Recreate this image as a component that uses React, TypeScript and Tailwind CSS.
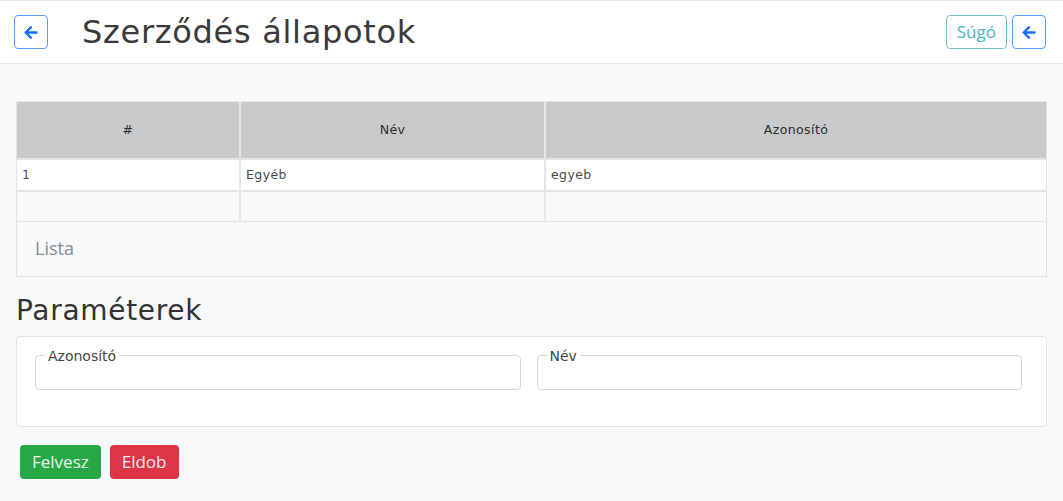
const mont = "font-['DejaVu_Sans',sans-serif]";
const open = "font-['Open_Sans',sans-serif]";

function ArrowIcon() {
  return (
    <svg viewBox="0 0 448 512" width="14" height="15" fill="currentColor">
      <path d="M257.5 445.1l-22.2 22.2c-9.4 9.4-24.6 9.4-33.9 0L7 273c-9.4-9.4-9.4-24.6 0-33.9L201.4 44.7c9.4-9.4 24.6-9.4 33.9 0l22.2 22.2c9.5 9.5 9.3 25-.4 34.3L136.6 216H424c13.3 0 24 10.7 24 24v32c0 13.3-10.7 24-24 24H136.6l120.5 114.8c9.8 9.3 10 24.8.4 34.3z" />
    </svg>
  );
}

function BackButton() {
  return (
    <button className="flex h-[34px] w-[34px] items-center justify-center rounded-[4px] border border-[#5a9bff] bg-white text-[#0d6efd]">
      <ArrowIcon />
    </button>
  );
}

function Field({ label }: { label: string }) {
  return (
    <fieldset className="h-[40px] rounded-[4px] border border-[#d3d7dc] bg-white px-[9px] pb-0">
      <legend className={`${mont} px-[3px] text-[14px] leading-[12px] text-[#444]`}>{label}</legend>
    </fieldset>
  );
}

export default function App() {
  const rows = [{ id: '1', name: 'Egyéb', key: 'egyeb' }];
  return (
    <div className="min-h-[501px] bg-[#f8f9fa]">
      <header className="flex h-[64px] items-center justify-between border-t border-b border-[#e6e6e6] bg-white px-[14px]">
        <div className="flex items-center gap-[34px]">
          <BackButton />
          <h1 className={`${mont} text-[32px] leading-none tracking-[0.7px] text-[#3a3a3a]`}>Szerződés állapotok</h1>
        </div>
        <div className="flex items-center gap-[5px] pr-[3px]">
          <button className={`${open} h-[34px] rounded-[4px] border border-[#6cc4d3] px-[10px] text-[17px] text-[#4cb4c6]`}>
            Súgó
          </button>
          <BackButton />
        </div>
      </header>

      <main className="px-[16px] pt-[37px]">
        <div className="border border-[#e1e3e6]">
          <table className={`${mont} w-full border-collapse text-[12.5px] tracking-[0.4px]`}>
            <thead>
              <tr className="h-[57px] bg-[#c8c9cb] text-[#2f2f2f]">
                <th className="w-[223px] border-r-2 border-[#e4e5e7] font-medium">#</th>
                <th className="w-[305px] border-r-2 border-[#e4e5e7] font-medium">Név</th>
                <th className="font-medium">Azonosító</th>
              </tr>
            </thead>
            <tbody>
              {rows.map((r) => (
                <tr key={r.id} className="h-[32px] border-t-2 border-b-2 border-[#e4e5e7] bg-white text-[#4a4a4a]">
                  <td className="border-r-2 border-[#e4e5e7] px-[5px]">{r.id}</td>
                  <td className="border-r-2 border-[#e4e5e7] px-[5px]">{r.name}</td>
                  <td className="px-[5px]">{r.key}</td>
                </tr>
              ))}
              <tr className="h-[30px] border-b border-[#e1e3e6]">
                <td className="border-r-2 border-[#e8e9eb]" />
                <td className="border-r-2 border-[#e8e9eb]" />
                <td />
              </tr>
            </tbody>
          </table>
          <div className={`${open} flex h-[54px] items-center px-[18px] text-[18px] text-[#868e96]`}>Lista</div>
        </div>

        <h2 className={`${mont} mt-[16px] text-[28px] leading-[36px] tracking-[0.7px] text-[#333]`}>Paraméterek</h2>

        <div className="mt-[7px] h-[91px] rounded-[4px] border border-[#e1e3e6] bg-white pl-[18px] pr-[24px] pt-[13px]">
          <div className="grid grid-cols-2 gap-[16px]">
            <Field label="Azonosító" />
            <Field label="Név" />
          </div>
        </div>

        <div className="mt-[18px] flex gap-[9px] pl-[4px]">
          <button className={`${open} h-[34px] rounded-[4px] bg-[#28a745] px-[12px] text-[17px] text-white/90`}>Felvesz</button>
          <button className={`${open} h-[34px] rounded-[4px] bg-[#dc3545] px-[12px] text-[17px] text-white/90`}>Eldob</button>
        </div>
      </main>
    </div>
  );
}
